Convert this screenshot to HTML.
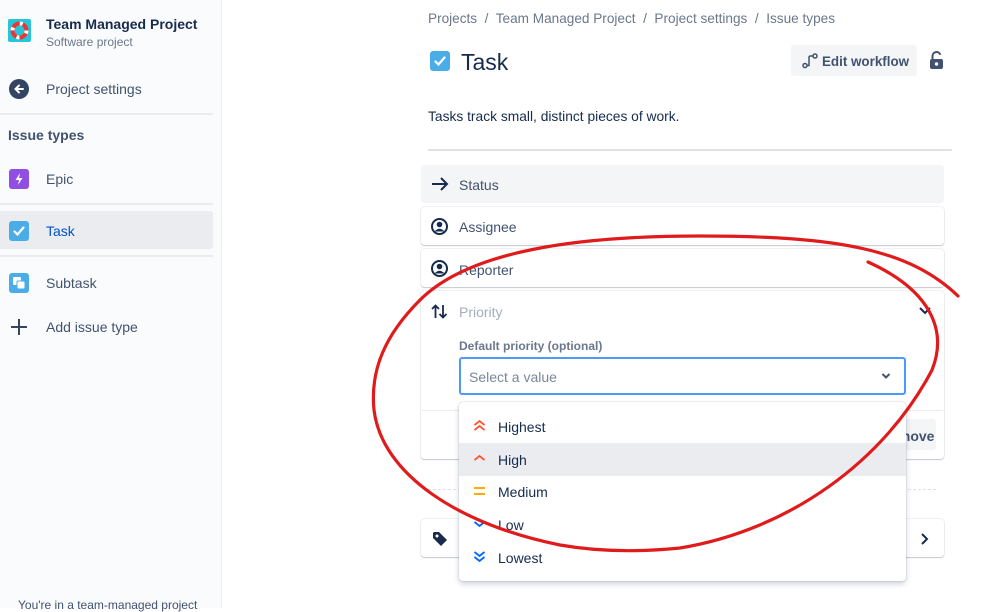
<!DOCTYPE html>
<html><head><meta charset="utf-8"><style>
*{box-sizing:border-box;margin:0;padding:0}
body{width:998px;height:608px;overflow:hidden;background:#fff;font-family:"Liberation Sans",sans-serif;color:#172b4d;position:relative}
.a{position:absolute;white-space:nowrap}
.side{position:absolute;left:0;top:0;width:222px;height:608px;background:#fafbfc;border-right:1px solid #ebecf0}
.hr{position:absolute;left:0;width:213px;height:2px;background:#ebecf0}
.card{position:absolute;left:421px;width:523px;background:#fff;border-radius:3px;box-shadow:0 0 1px rgba(9,30,66,.35),0 1px 1px rgba(9,30,66,.2)}
.t14{font-size:14px}
.item{position:absolute;left:0;width:447px;height:33px}
</style></head><body>
<div class="side">
  <svg class="a" style="left:8px;top:19px" width="23" height="23" viewBox="0 0 23 23"><rect width="23" height="23" rx="2" fill="#26c6da"/><circle cx="11.5" cy="11.5" r="7" fill="none" stroke="#e53935" stroke-width="4"/><circle cx="11.5" cy="11.5" r="7" fill="none" stroke="#fff" stroke-width="4" stroke-dasharray="3 8"/></svg>
  <div class="a" style="left:46px;top:16px;font-size:14px;font-weight:bold">Team Managed Project</div>
  <div class="a" style="left:46px;top:35px;font-size:12px;color:#6b778c">Software project</div>
  <svg class="a" style="left:9px;top:79px" width="20" height="20" viewBox="0 0 20 20"><circle cx="10" cy="10" r="10" fill="#344563"/><path d="M14 10H7M10 6.5L6.5 10 10 13.5" stroke="#fff" stroke-width="2" fill="none" stroke-linecap="round"/></svg>
  <div class="a t14" style="left:46px;top:81px;color:#42526e">Project settings</div>
  <div class="hr" style="top:113px"></div>
  <div class="a t14" style="left:8px;top:127px;font-weight:bold;color:#42526e">Issue types</div>
  <svg class="a" style="left:9px;top:169px" width="20" height="20" viewBox="0 0 20 20"><rect width="20" height="20" rx="3" fill="#904ee2"/><path d="M11 4L6.5 11H10l-1 5 4.5-7H10z" fill="#fff"/></svg>
  <div class="a t14" style="left:46px;top:171px;color:#42526e">Epic</div>
  <div class="hr" style="top:203px"></div>
  <div class="a" style="left:0;top:211px;width:213px;height:38px;background:#ebecf0;border-radius:0 3px 3px 0"></div>
  <svg class="a" style="left:9px;top:221px" width="20" height="20" viewBox="0 0 20 20"><rect width="20" height="20" rx="3" fill="#4bade8"/><path d="M5.5 10.5l3 3 6-7" stroke="#fff" stroke-width="2.2" fill="none" stroke-linecap="round"/></svg>
  <div class="a t14" style="left:46px;top:223px;color:#0052cc">Task</div>
  <div class="hr" style="top:255px"></div>
  <svg class="a" style="left:9px;top:273px" width="20" height="20" viewBox="0 0 20 20"><rect width="20" height="20" rx="3" fill="#4bade8"/><rect x="4" y="4" width="8" height="8" rx="1.5" fill="#fff"/><rect x="8" y="8" width="8" height="8" rx="1.5" fill="#fff" stroke="#4bade8"/></svg>
  <div class="a t14" style="left:46px;top:275px;color:#42526e">Subtask</div>
  <svg class="a" style="left:9px;top:317px" width="20" height="20" viewBox="0 0 20 20"><path d="M10 2v16M2 10h16" stroke="#344563" stroke-width="2"/></svg>
  <div class="a t14" style="left:46px;top:319px;color:#42526e">Add issue type</div>
  <div class="a" style="left:18px;top:598px;font-size:12px;color:#42526e">You're in a team-managed project</div>
</div>

<div class="a" style="left:428px;top:11px;font-size:13.6px;color:#6b778c">Projects &nbsp;/&nbsp; Team Managed Project &nbsp;/&nbsp; Project settings &nbsp;/&nbsp; Issue types</div>
<svg class="a" style="left:430px;top:51px" width="20" height="20" viewBox="0 0 20 20"><rect width="20" height="20" rx="3" fill="#4bade8"/><path d="M5.5 10.5l3 3 6-7" stroke="#fff" stroke-width="2.2" fill="none" stroke-linecap="round"/></svg>
<div class="a" style="left:461px;top:49px;font-size:23px;font-weight:500">Task</div>
<div class="a" style="left:791px;top:45px;width:126px;height:31px;background:#f4f5f7;border-radius:3px"></div>
<svg class="a" style="left:802px;top:53px" width="16" height="16" viewBox="0 0 16 16"><circle cx="3" cy="12.5" r="2" fill="none" stroke="#42526e" stroke-width="1.5"/><circle cx="13" cy="3" r="2" fill="none" stroke="#42526e" stroke-width="1.5"/><path d="M5 12.5h2V4.5Q7 3 8.5 3H11" fill="none" stroke="#42526e" stroke-width="1.5"/></svg>
<div class="a" style="left:822px;top:54px;font-size:13.4px;color:#42526e;font-weight:bold">Edit workflow</div>
<svg class="a" style="left:929px;top:51px" width="15" height="19" viewBox="0 0 15 19"><path d="M3.5 8V5a4 4 0 0 1 7.8-1.2" fill="none" stroke="#42526e" stroke-width="2"/><rect x="1" y="8" width="13" height="10" rx="2" fill="#42526e"/><circle cx="7.5" cy="13" r="1.7" fill="#fff"/></svg>
<div class="a" style="left:428px;top:109px;font-size:13.8px;color:#172b4d">Tasks track small, distinct pieces of work.</div>
<div class="a" style="left:428px;top:149px;width:524px;height:2px;background:#dfe1e6"></div>

<div class="a" style="left:421px;top:165px;width:523px;height:38px;background:#f4f5f7;border-radius:3px"></div>
<svg class="a" style="left:431px;top:176px" width="18" height="16" viewBox="0 0 18 16"><path d="M1 8h15M10 2l6 6-6 6" fill="none" stroke="#172b4d" stroke-width="2"/></svg>
<div class="a t14" style="left:459px;top:177px;color:#42526e">Status</div>

<div class="card" style="top:207px;height:38px"></div>
<svg class="a" style="left:431px;top:218px" width="17" height="17" viewBox="0 0 17 17"><circle cx="8.5" cy="8.5" r="7.5" fill="none" stroke="#172b4d" stroke-width="2"/><circle cx="8.5" cy="6.5" r="2.8" fill="#172b4d"/><path d="M3.5 13.5Q8.5 8 13.5 13.5" fill="#172b4d"/></svg>
<div class="a t14" style="left:459px;top:219px;color:#42526e">Assignee</div>
<div class="card" style="top:249px;height:38px"></div>
<svg class="a" style="left:431px;top:260px" width="17" height="17" viewBox="0 0 17 17"><circle cx="8.5" cy="8.5" r="7.5" fill="none" stroke="#172b4d" stroke-width="2"/><circle cx="8.5" cy="6.5" r="2.8" fill="#172b4d"/><path d="M3.5 13.5Q8.5 8 13.5 13.5" fill="#172b4d"/></svg>
<div class="a t14" style="left:459px;top:262px;color:#42526e">Reporter</div>

<div class="card" style="top:291px;height:168px"></div>
<svg class="a" style="left:431px;top:304px" width="17" height="15" viewBox="0 0 17 15"><path d="M4.5 14V2M1 5l3.5-3.5L8 5M12 1v12M8.5 10l3.5 3.5 3.5-3.5" fill="none" stroke="#172b4d" stroke-width="1.8"/></svg>
<div class="a t14" style="left:459px;top:304px;color:#a5adba">Priority</div>
<svg class="a" style="left:918px;top:306px" width="14" height="10" viewBox="0 0 14 10"><path d="M2 2l5 5 5-5" fill="none" stroke="#172b4d" stroke-width="2"/></svg>
<div class="a" style="left:459px;top:339px;font-size:12px;font-weight:bold;color:#6b778c">Default priority (optional)</div>
<div class="a" style="left:459px;top:357px;width:447px;height:38px;border:2px solid #4c9aff;border-radius:3px;background:#fff"></div>
<div class="a t14" style="left:469px;top:369px;color:#7a869a">Select a value</div>
<svg class="a" style="left:881px;top:372px" width="10" height="8" viewBox="0 0 10 8"><path d="M1.5 2l3.5 3.5L8.5 2" fill="none" stroke="#42526e" stroke-width="2"/></svg>
<div class="a" style="left:422px;top:410px;width:521px;height:1px;background:#ebecf0"></div>
<div class="a" style="left:860px;top:419px;width:76px;height:31px;background:#f4f5f7;border-radius:3px"></div>
<div class="a t14" style="left:880px;top:428px;color:#42526e;font-weight:bold">Remove</div>

<div class="a" style="left:428px;top:489px;width:508px;border-top:1px dashed #dfe1e6"></div>
<div class="card" style="top:519px;height:38px"></div>
<svg class="a" style="left:432px;top:531px" width="16" height="16" viewBox="0 0 16 16"><path d="M1 2v5l8 8 6-6-8-8H2z" fill="#172b4d"/><circle cx="5" cy="5" r="1.5" fill="#fff"/></svg>
<svg class="a" style="left:920px;top:532px" width="10" height="14" viewBox="0 0 10 14"><path d="M2 2l5 5-5 5" fill="none" stroke="#172b4d" stroke-width="2"/></svg>

<div class="a" style="left:459px;top:402px;width:447px;height:179px;background:#fff;border-radius:4px;box-shadow:0 0 1px rgba(9,30,66,.4),0 3px 6px rgba(9,30,66,.2)">
  <div class="item" style="top:8px"><svg class="a" style="left:14px;top:9px" width="13" height="12" viewBox="0 0 13 12"><path d="M1.5 6l5-4 5 4M1.5 11l5-4 5 4" fill="none" stroke="#ff5630" stroke-width="1.8"/></svg><div class="a t14" style="left:39px;top:9px">Highest</div></div>
  <div class="item" style="top:41px;background:#ebecf0"><svg class="a" style="left:14px;top:11px" width="13" height="8" viewBox="0 0 13 8"><path d="M1.5 6l5-4 5 4" fill="none" stroke="#ff5630" stroke-width="1.8"/></svg><div class="a t14" style="left:39px;top:9px">High</div></div>
  <div class="item" style="top:74px"><svg class="a" style="left:14px;top:10px" width="13" height="10" viewBox="0 0 13 10"><path d="M1 2h11M1 8h11" stroke="#ffab00" stroke-width="2"/></svg><div class="a t14" style="left:39px;top:8px">Medium</div></div>
  <div class="item" style="top:107px"><svg class="a" style="left:14px;top:11px" width="13" height="8" viewBox="0 0 13 8"><path d="M1.5 2l5 4 5-4" fill="none" stroke="#0065ff" stroke-width="1.8"/></svg><div class="a t14" style="left:39px;top:8px">Low</div></div>
  <div class="item" style="top:140px"><svg class="a" style="left:14px;top:9px" width="13" height="12" viewBox="0 0 13 12"><path d="M1.5 1l5 4 5-4M1.5 6l5 4 5-4" fill="none" stroke="#0065ff" stroke-width="1.8"/></svg><div class="a t14" style="left:39px;top:8px">Lowest</div></div>
</div>

<svg class="a" style="left:0;top:0" width="998" height="608" viewBox="0 0 998 608"><path d="M958 296C910 250 840 236 700 236C580 236 470 250 420 300C385 335 370 370 374 410C382 475 460 525 560 545C600 552 640 552 680 548C790 530 885 460 932 370C948 330 930 290 868 262" fill="none" stroke="#e01b1b" stroke-width="3.2" stroke-linecap="round"/></svg>
</body></html>
